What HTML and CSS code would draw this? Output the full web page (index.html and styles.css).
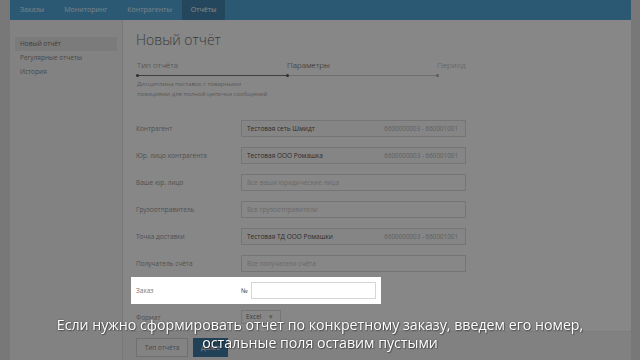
FILE: index.html
```html
<!DOCTYPE html>
<html lang="ru">
<head>
    <meta charset="UTF-8">
    <meta name="viewport" content="width=device-width, initial-scale=1.0">
    <title>Новый отчёт</title>
    <link rel="stylesheet" href="styles.css">
</head>
<body>

    <div class="app">
        <header class="topnav">
            <a class="nav-item">Заказы</a>
            <a class="nav-item">Мониторинг</a>
            <a class="nav-item">Контрагенты</a>
            <a class="nav-item active">Отчёты</a>
        </header>

        <div class="layout">
            <aside class="sidebar">
                <a class="side-item active">Новый отчёт</a>
                <a class="side-item">Регулярные отчеты</a>
                <a class="side-item">История</a>
            </aside>

            <main class="content">
                <h1 class="page-title">Новый отчёт</h1>

                <div class="steps">
                    <div class="step done">
                        <span class="step-label">Тип отчёта</span>
                        <div class="step-track"><span class="step-dot"></span><span class="step-line"></span></div>
                    </div>
                    <div class="step current">
                        <span class="step-label">Параметры</span>
                        <div class="step-track"><span class="step-dot"></span><span class="step-line"></span></div>
                    </div>
                    <div class="step last">
                        <span class="step-label">Период</span>
                        <div class="step-track"><span class="step-dot"></span></div>
                    </div>
                </div>

                <p class="step-note">Дисциплина поставок с товарными<br>позициями для полной цепочки сообщений</p>

                <form class="report-form">
                    <div class="form-row">
                        <label class="form-label">Контрагент</label>
                        <div class="field filled"><span>Тестовая сеть Шмидт</span><span class="field-code">6600000003 - 660001001</span></div>
                    </div>
                    <div class="form-row">
                        <label class="form-label">Юр. лицо контрагента</label>
                        <div class="field filled"><span>Тестовая ООО Ромашка</span><span class="field-code">6600000003 - 660001001</span></div>
                    </div>
                    <div class="form-row">
                        <label class="form-label">Ваше юр. лицо</label>
                        <div class="field"><span class="placeholder">Все ваши юридические лица</span></div>
                    </div>
                    <div class="form-row">
                        <label class="form-label">Грузоотправитель</label>
                        <div class="field"><span class="placeholder">Все грузоотправители</span></div>
                    </div>
                    <div class="form-row">
                        <label class="form-label">Точка доставки</label>
                        <div class="field filled"><span>Тестовая ТД ООО Ромашки</span><span class="field-code">6600000003 - 660001001</span></div>
                    </div>
                    <div class="form-row">
                        <label class="form-label">Получатель счёта</label>
                        <div class="field"><span class="placeholder">Все получатели счёта</span></div>
                    </div>
                    <div class="form-row spotlight">
                        <label class="form-label">Заказ</label>
                        <span class="num-sign">№</span>
                        <input class="order-input" type="text">
                    </div>
                    <div class="form-row format-row">
                        <label class="form-label">Формат</label>
                        <div class="select">Excel <span class="caret">▾</span></div>
                    </div>
                </form>

                <div class="actions">
                    <button class="btn">Тип отчёта</button>
                    <button class="btn primary">Далее</button>
                </div>
            </main>
        </div>
    </div>

    <div class="dim"></div>

    <div class="subtitles">
        <p>Если нужно сформировать отчет по конкретному заказу, введем его номер,<br>остальные поля оставим пустыми</p>
    </div>

</body>
</html>
```

FILE: styles.css
```css
body {
    margin: 0;
    background: #e2e2e2;
    font-family: "Open Sans", "Noto Sans", sans-serif;
    color: #555;
    height: 360px;
    overflow: hidden;
}

.app {
    margin: 0 9px 0 10px;
    background: #fff;
    height: 360px;
    display: flex;
    flex-direction: column;
}

/* top navigation */
.topnav {
    height: 20px;
    background: #52a9dc;
    display: flex;
}

.nav-item {
    padding: 0 10px;
    line-height: 20px;
    font-size: 7px;
    color: #e2f1fa;
}

.nav-item.active {
    background: #4687b1;
    padding: 0 9px;
    color: #fff;
}

.layout {
    flex: 1;
    display: flex;
}

/* left menu */
.sidebar {
    width: 102px;
    padding: 17px 5px 0 5px;
    background: #f6f6f6;
    border-right: 1px solid #e4e4e4;
    display: flex;
    flex-direction: column;
}

.side-item {
    height: 14px;
    line-height: 14px;
    padding-left: 5px;
    font-size: 6.5px;
    color: #888;
}

.side-item.active {
    background: #e9e9e9;
    color: #777;
}

/* main part */
.content {
    flex: 1;
    padding: 11px 0 0 13px;
    display: flex;
    flex-direction: column;
}

.page-title {
    margin: 0;
    font-size: 14px;
    line-height: 18px;
    font-weight: 300;
    color: #6f6f6f;
}

.steps {
    display: flex;
    margin-top: 11px;
}

.step {
    width: 150px;
    display: flex;
    flex-direction: column;
}

.step-label {
    font-size: 8px;
    line-height: 10px;
    padding-left: 1px;
    font-weight: 300;
    color: #777;
}

.step.current .step-label {
    color: #444;
}

.step.last .step-label {
    color: #aaa;
}

.step-track {
    margin-top: 4px;
    height: 3px;
    display: flex;
    align-items: center;
}

.step-dot {
    width: 3px;
    height: 3px;
    border-radius: 50%;
    background: #555;
}

.step.last .step-dot {
    background: #aaa;
}

.step-line {
    flex: 1;
    height: 1px;
    background: #777;
}

.step.current .step-line {
    background: #d0d0d0;
}

.step-note {
    margin: 3px 0 0 1px;
    font-size: 6px;
    line-height: 9.5px;
    color: #aaa;
}

/* form */
.report-form {
    margin-top: 16px;
    display: flex;
    flex-direction: column;
}

.form-row {
    display: flex;
    align-items: center;
    padding: 5px;
    margin-left: -5px;
    width: 330px;
}

.form-label {
    width: 105px;
    font-size: 6.5px;
    color: #999;
}

.field {
    width: 225px;
    height: 17px;
    box-sizing: border-box;
    border: 1px solid #ddd;
    background: #fff;
    display: flex;
    align-items: center;
    justify-content: space-between;
    padding: 0 7px 0 5px;
    font-size: 6.5px;
    color: #555;
}

.field.filled {
    background: #fcfcfc;
}

.field-code {
    color: #b4b4b4;
    font-size: 6.3px;
}

.placeholder {
    color: #c8c8c8;
}

.spotlight {
    position: relative;
    z-index: 20;
    background: #fff;
    width: 240px;
}

.spotlight .form-label {
    color: #777;
}

.num-sign {
    width: 10px;
    font-size: 6.5px;
    color: #444;
}

.order-input {
    width: 125px;
    height: 17px;
    box-sizing: border-box;
    border: 1px solid #d6d6d6;
    margin: 0;
    padding: 0;
}

.format-row {
    padding-top: 6px;
}

.select {
    width: 40px;
    height: 14px;
    box-sizing: border-box;
    border: 1px solid #ddd;
    font-size: 6.5px;
    line-height: 12px;
    padding-left: 4px;
    color: #777;
}

.caret {
    margin-left: 6px;
    color: #aaa;
}

/* bottom buttons */
.actions {
    margin: auto 0 0 -13px;
    padding: 6px 13px 3px;
    background: #f4f4f4;
    border-top: 1px solid #ececec;
    display: flex;
    gap: 5px;
}

.btn {
    height: 19px;
    padding: 0;
    border: 1px solid #d4d4d4;
    background: #f8f8f8;
    font-family: "Open Sans", sans-serif;
    font-size: 6.5px;
    white-space: nowrap;
    color: #888;
    width: 52px;
}

.btn.primary {
    width: 35px;
    background: #3f7ca6;
    border-color: #3f7ca6;
    color: #fff;
}

/* tutorial overlay */
.dim {
    position: fixed;
    top: 0;
    left: 0;
    right: 0;
    bottom: 0;
    background: rgba(0, 0, 0, 0.47);
    z-index: 10;
}

.subtitles {
    position: fixed;
    left: 0;
    right: 0;
    top: 316px;
    z-index: 30;
    text-align: center;
}

.subtitles p {
    margin: 0;
    font-size: 14.2px;
    line-height: 18px;
    color: #fff;
    text-shadow: 0 0 2px rgba(0, 0, 0, 0.5), 1px 1px 1px rgba(0, 0, 0, 0.35);
}
```
